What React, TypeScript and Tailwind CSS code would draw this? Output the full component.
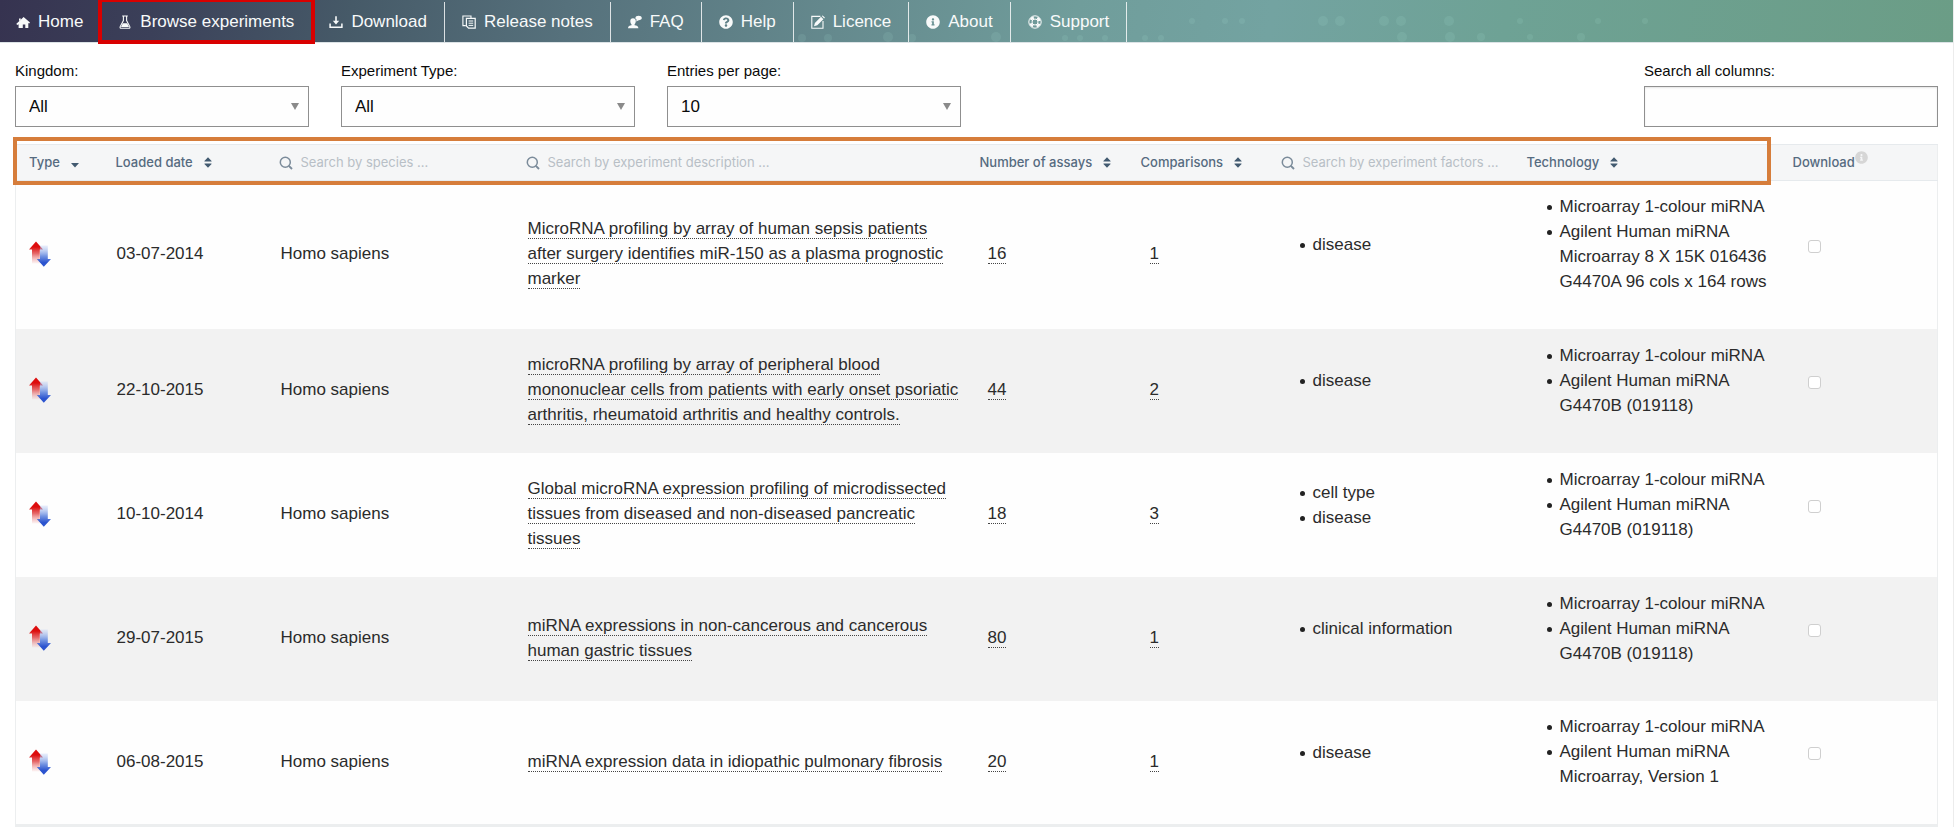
import React from "react";
import { FaQuestionCircle, FaInfoCircle } from "react-icons/fa";

const ICON = "size-3.5 shrink-0";

const HomeIcon = () => (
  <svg viewBox="0 0 14 14" className={ICON} fill="currentColor" aria-hidden="true">
    <path d="M7.6 2 L14 7.6 L13.2 8.6 L12.3 7.9 V13 H9.3 V9.4 H6.8 V13 H2.6 V9.2 L1.6 9.9 L.2 8.9 Z M3 3.4 H4.8 V4.4 L3 6 Z" />
  </svg>
);

const FlaskIcon = () => (
  <svg viewBox="0 0 14 14" className={ICON} fill="none" stroke="currentColor" aria-hidden="true">
    <path d="M4.2 1 H9.8 M5.4 1 V5.6 L2.2 11.6 Q1.6 13.3 3.3 13.3 H10.7 Q12.4 13.3 11.8 11.6 L8.6 5.6 V1" strokeWidth="1.1" />
    <path d="M4.8 8.2 H9.2 L11 12 H3 Z" fill="currentColor" stroke="none" />
  </svg>
);

const DownloadIcon = () => (
  <svg viewBox="0 0 14 14" className={ICON} fill="none" stroke="currentColor" aria-hidden="true">
    <path d="M1.1 8.5 V12.2 H12.9 V8.5" strokeWidth="1.5" />
    <path d="M7 1.2 V7" strokeWidth="1.6" />
    <path d="M3.8 5.8 H10.2 L7 9.6 Z" fill="currentColor" stroke="none" />
  </svg>
);

const NotesIcon = () => (
  <svg viewBox="0 0 14 14" className={ICON} fill="none" stroke="currentColor" aria-hidden="true">
    <path d="M3.8 10.6 H.9 V1 H9 V3" strokeWidth="1.1" />
    <path d="M4.4 3.4 H13.2 V13.2 H6.6 L4.4 11 Z" strokeWidth="1.2" />
    <path d="M6.6 6 H11.2 M6.6 8.2 H11.2 M6.6 10.4 H11.2" strokeWidth="1" />
  </svg>
);

const FaqIcon = () => (
  <svg viewBox="0 0 14 14" className={ICON} fill="currentColor" aria-hidden="true">
    <path d="M5 3.2 C6.8 3.2 7.8 4.4 7.8 6 C7.8 7.4 7.2 8.6 6.6 9.2 V10.2 C8.6 10.6 10.4 11 10.4 13.2 H0 C0 11 1.6 10.6 3.5 10.2 V9.2 C2.8 8.6 2.3 7.4 2.3 6 C2.3 4.4 3.2 3.2 5 3.2 Z" />
    <path d="M10.6 .8 C12.4 .8 13.8 1.7 13.8 3 C13.8 4.3 12.4 5.2 10.8 5.2 L8 6.6 L8.7 4.7 C7.9 4.3 7.4 3.7 7.4 3 C7.4 1.7 8.8 .8 10.6 .8 Z" />
  </svg>
);

const LicenceIcon = () => (
  <svg viewBox="0 0 14 14" className={ICON} fill="none" stroke="currentColor" aria-hidden="true">
    <path d="M9.4 1.4 H.8 V13.2 H12 V6" strokeWidth="1.1" />
    <path d="M3 11.2 L3.9 7.9 L10 1.8 L12.4 4.2 L6.3 10.3 Z M10.8 1.1 L11.6 .4 L13.9 2.6 L13.1 3.4 Z" fill="currentColor" stroke="none" />
  </svg>
);

const SupportIcon = () => (
  <svg viewBox="0 0 14 14" className={ICON} fill="none" stroke="currentColor" aria-hidden="true">
    <circle cx="7" cy="7" r="6.2" strokeWidth="1" />
    <circle cx="7" cy="7" r="3" strokeWidth="1" />
    <circle cx="7" cy="7" r="4.6" strokeWidth="2.6" strokeDasharray="3.6 3.626" strokeDashoffset="-1.8" />
  </svg>
);

const navItems = [
  { label: "Home", icon: <HomeIcon /> },
  { label: "Browse experiments", icon: <FlaskIcon />, active: true },
  { label: "Download", icon: <DownloadIcon /> },
  { label: "Release notes", icon: <NotesIcon /> },
  { label: "FAQ", icon: <FaqIcon /> },
  { label: "Help", icon: <FaQuestionCircle className={ICON} aria-hidden="true" /> },
  { label: "Licence", icon: <LicenceIcon /> },
  { label: "About", icon: <FaInfoCircle className={ICON} aria-hidden="true" /> },
  { label: "Support", icon: <SupportIcon /> },
];

const dots: [number, number, number][] = [
  [802, 38, 4], [828, 38, 4], [888, 37, 5], [912, 38, 4], [996, 37, 5],
  [1065, 38, 3], [1080, 38, 3], [1105, 38, 3], [1145, 38, 3], [1161, 38, 3], [1192, 21, 3],
  [1225, 21, 3], [1242, 21, 3], [1323, 21, 5], [1340, 21, 5], [1384, 21, 5], [1401, 21, 5],
  [1449, 21, 5], [1402, 37, 5], [1450, 37, 5], [1481, 37, 4], [1530, 37, 3], [1581, 37, 4],
  [1520, 21, 3], [1598, 21, 3], [1645, 21, 3],
];

const HeroDots = () => (
  <svg className="absolute inset-y-0 left-0 h-full w-full opacity-10" aria-hidden="true" fill="#b9f5e4">
    {dots.map(([x, y, r]) => (
      <circle key={`${x}-${y}`} cx={x} cy={y} r={r} />
    ))}
  </svg>
);

function TopNav() {
  return (
    <nav className="relative h-[43px] border-b border-[#dce3e6] bg-[linear-gradient(100deg,#363350_0%,#3b4059_8%,#465a68_18%,#56717c_29%,#658a8e_43%,#709d9b_55%,#73a3a1_65%,#6ea295_77%,#6b9d86_100%)] pt-0.5 text-[#f8fafa]">
      <HeroDots />
      <ul className="relative -ml-px flex h-10">
        {navItems.map(({ label, icon, active }) => (
          <li key={label} className="relative border-r border-white/80">
            <a href="#" className="flex h-full items-center gap-2 px-[17px] pb-px text-[17px] leading-[25px] whitespace-nowrap">
              {icon}
              {label}
            </a>
            {active && <span className="pointer-events-none absolute -top-1 -right-1 -bottom-0.5 -left-[3px] border-4 border-[#d90000]" />}
          </li>
        ))}
      </ul>
    </nav>
  );
}

const FIELD =
  "h-[41px] w-full appearance-none rounded-none border border-[#8f8f8f] bg-[#fefefe] px-[13px] pt-px text-[17px] text-[#0a0a0a]";

function SelectField({ id, label, options }: { id: string; label: string; options: string[] }) {
  return (
    <div className="w-[294px]">
      <label htmlFor={id} className="block text-[15px] leading-[30px] text-[#0a0a0a]">
        {label}
      </label>
      <div className="relative">
        <select id={id} className={FIELD}>
          {options.map((o) => (
            <option key={o}>{o}</option>
          ))}
        </select>
        <svg viewBox="0 0 8 7" className="pointer-events-none absolute top-[17px] right-[10px] h-[7px] w-2" fill="#8a8a8a" aria-hidden="true">
          <path d="M0 0 H8 L4 7 Z" />
        </svg>
      </div>
    </div>
  );
}

function Filters() {
  return (
    <form className="flex flex-wrap gap-8">
      <SelectField id="kingdom" label="Kingdom:" options={["All", "Animals", "Plants", "Fungi", "Protists"]} />
      <SelectField id="type" label="Experiment Type:" options={["All", "Baseline", "Differential"]} />
      <SelectField id="entries" label="Entries per page:" options={["10", "25", "50"]} />
      <div className="ml-auto w-[294px]">
        <label htmlFor="search-all" className="block text-[15px] leading-[30px] text-[#0a0a0a]">
          Search all columns:
        </label>
        <input id="search-all" type="text" className={`${FIELD} shadow-[inset_0_1px_2px_rgba(10,10,10,0.1)]`} />
      </div>
    </form>
  );
}

const SortIcon = () => (
  <svg viewBox="0 0 8 11" className="h-[11px] w-2" fill="#425a70" aria-hidden="true">
    <path d="M4 .2 L7.6 4 Q7.8 4.6 7.2 4.6 H.8 Q.2 4.6 .4 4 Z M4 10.8 L7.6 7 Q7.8 6.4 7.2 6.4 H.8 Q.2 6.4 .4 7 Z" />
  </svg>
);

const CaretIcon = () => (
  <svg viewBox="0 0 8 11" className="h-[11px] w-2" fill="#425a70" aria-hidden="true">
    <path d="M4 10.4 L7.6 6.6 Q7.8 6 7.2 6 H.8 Q.2 6 .4 6.6 Z" />
  </svg>
);

const SearchIcon = () => (
  <svg viewBox="0 0 14 14" className={ICON} fill="none" stroke="#7b8b9a" strokeWidth="1.5" aria-hidden="true">
    <circle cx="6.3" cy="6.3" r="5" />
    <path d="M9.9 9.9 L13 13" strokeWidth="1.9" />
  </svg>
);

function SortHeader({ label, icon = <SortIcon /> }: { label: string; icon?: React.ReactNode }) {
  return (
    <th scope="col" className="pl-[13px] text-left font-medium">
      <button type="button" className="flex items-center gap-[11px] whitespace-nowrap">
        {label}
        {icon}
      </button>
    </th>
  );
}

function SearchHeader({ placeholder }: { placeholder: string }) {
  return (
    <th scope="col" className="pl-3 text-left font-medium">
      <label className="flex items-center gap-2">
        <SearchIcon />
        <input
          type="text"
          aria-label={placeholder}
          placeholder={placeholder}
          className="w-full min-w-0 bg-transparent font-normal outline-none placeholder:text-[#b8bfc6]"
        />
      </label>
    </th>
  );
}

const DifferentialIcon = () => (
  <svg viewBox="0 0 22 26" className="h-[26px] w-[22px]" role="img" aria-label="Differential experiment">
    <defs>
      <linearGradient id="up" x1="0" y1="0" x2="0" y2="1">
        <stop offset="0.25" stopColor="#dd0d0d" />
        <stop offset="0.55" stopColor="#e35a5b" stopOpacity="0.9" />
        <stop offset="1" stopColor="#e99" stopOpacity="0.1" />
      </linearGradient>
      <linearGradient id="down" x1="0" y1="0" x2="0" y2="1">
        <stop offset="0" stopColor="#b9ccf5" stopOpacity="0.3" />
        <stop offset="0.5" stopColor="#7394e2" />
        <stop offset="0.8" stopColor="#2c54cf" />
      </linearGradient>
    </defs>
    <path d="M7 .5 L14 8.5 H10.8 V22.5 H3 V8.5 H0 Z" fill="url(#up)" />
    <path d="M11 4.5 H18.8 V18 H22 L14.8 25.7 L7.8 18 H11 Z" fill="url(#down)" />
  </svg>
);

const array019118 = ["Microarray 1-colour miRNA", "Agilent Human miRNA G4470B (019118)"];

const rows = [
  {
    date: "03-07-2014",
    title: "MicroRNA profiling by array of human sepsis patients after surgery identifies miR-150 as a plasma prognostic marker",
    assays: 16,
    comparisons: 1,
    factors: ["disease"],
    technology: ["Microarray 1-colour miRNA", "Agilent Human miRNA Microarray 8 X 15K 016436 G4470A 96 cols x 164 rows"],
  },
  {
    date: "22-10-2015",
    title: "microRNA profiling by array of peripheral blood mononuclear cells from patients with early onset psoriatic arthritis, rheumatoid arthritis and healthy controls.",
    assays: 44,
    comparisons: 2,
    factors: ["disease"],
    technology: array019118,
  },
  {
    date: "10-10-2014",
    title: "Global microRNA expression profiling of microdissected tissues from diseased and non-diseased pancreatic tissues",
    assays: 18,
    comparisons: 3,
    factors: ["cell type", "disease"],
    technology: array019118,
  },
  {
    date: "29-07-2015",
    title: "miRNA expressions in non-cancerous and cancerous human gastric tissues",
    assays: 80,
    comparisons: 1,
    factors: ["clinical information"],
    technology: array019118,
  },
  {
    date: "06-08-2015",
    title: "miRNA expression data in idiopathic pulmonary fibrosis",
    assays: 20,
    comparisons: 1,
    factors: ["disease"],
    technology: ["Microarray 1-colour miRNA", "Agilent Human miRNA Microarray, Version 1"],
  },
];

const LINK = "border-b border-dotted border-[#444]";

function BulletList({ items }: { items: string[] }) {
  return (
    <ul className="mb-[21px]">
      {items.map((item) => (
        <li key={item} className="flex gap-2">
          <span className="mt-[11px] size-[5px] shrink-0 rounded-full bg-[#222]" />
          <span>{item}</span>
        </li>
      ))}
    </ul>
  );
}

function ExperimentsTable() {
  return (
    <div className="relative mt-[17px]">
      <table className="w-full table-fixed border-collapse border border-b-[3px] border-[#eceeef]">
        <colgroup>
          <col className="w-[87px]" />
          <col className="w-[164px]" />
          <col className="w-[247px]" />
          <col className="w-[453px]" />
          <col className="w-[161px]" />
          <col className="w-[141px]" />
          <col className="w-[245px]" />
          <col className="w-[266px]" />
          <col className="w-[158px]" />
        </colgroup>
        <thead className="border-y border-[#e6eaed] bg-[#f5f6f7] font-[Inter,sans-serif] text-[13px] text-[#566b80]">
          <tr className="h-9">
            <SortHeader label="Type" icon={<CaretIcon />} />
            <SortHeader label="Loaded date" />
            <SearchHeader placeholder="Search by species ..." />
            <SearchHeader placeholder="Search by experiment description ..." />
            <SortHeader label="Number of assays" />
            <SortHeader label="Comparisons" />
            <SearchHeader placeholder="Search by experiment factors ..." />
            <SortHeader label="Technology" />
            <th scope="col" className="pl-[13px] text-left font-medium">
              <span className="flex items-center">
                Download
                <FaInfoCircle className="mb-2.5 size-[13px] text-[#d6d6d6]" aria-hidden="true" />
              </span>
            </th>
          </tr>
        </thead>
        <tbody className="text-[17px] leading-[25px] text-[#2b2b2b]">
          {rows.map((row) => (
            <tr key={row.date} className="h-[124px] bg-[#fefefe] even:bg-[#f2f2f2]">
              <td className="pb-0.5 pl-[13px]">
                <DifferentialIcon />
              </td>
              <td className="pb-[3px] pl-3.5">{row.date}</td>
              <td className="pb-[3px] pl-3.5">Homo sapiens</td>
              <td className="pr-2 pb-[3px] pl-3.5">
                <a href="#" className={LINK}>
                  {row.title}
                </a>
              </td>
              <td className="pb-[3px] pl-[21px]">
                <a href="#" className={LINK}>
                  {row.assays}
                </a>
              </td>
              <td className="pb-[3px] pl-[22px]">
                <a href="#" className={LINK}>
                  {row.comparisons}
                </a>
              </td>
              <td className="pl-[31px]">
                <BulletList items={row.factors} />
              </td>
              <td className="pt-[13px] pr-3 pb-3.5 pl-[33px]">
                <BulletList items={row.technology} />
              </td>
              <td className="pl-7">
                <input
                  type="checkbox"
                  aria-label={`Download ${row.title}`}
                  className="mb-[18px] block size-[13px] appearance-none rounded-[3px] border border-[#cfcfcf] bg-white"
                />
              </td>
            </tr>
          ))}
        </tbody>
      </table>
      <div className="pointer-events-none absolute -top-[7px] right-[167px] -left-0.5 h-12 border-4 border-[#d67d3b]" />
    </div>
  );
}

export default function App() {
  return (
    <div className="border-r border-[#ececec] bg-white font-['Liberation_Sans',Arial,sans-serif]">
      <TopNav />
      <main className="px-[15px] pt-[13px]">
        <Filters />
        <ExperimentsTable />
      </main>
    </div>
  );
}
